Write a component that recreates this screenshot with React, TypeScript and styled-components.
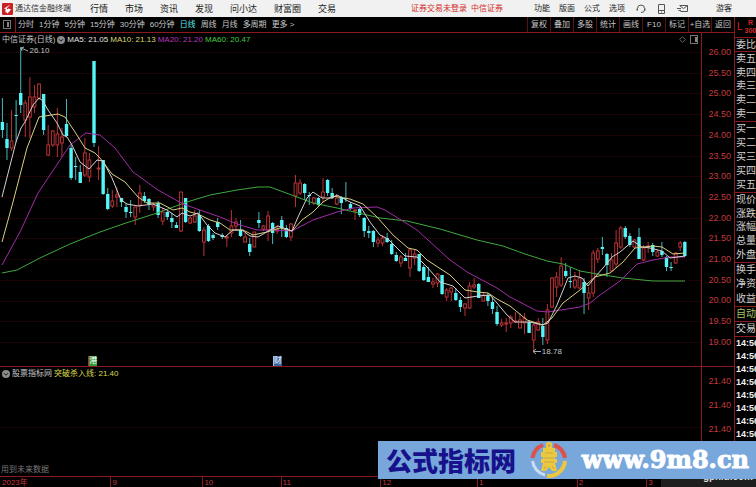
import React from "react";
import styled, { createGlobalStyle } from "styled-components";

const LINE = "#8a1a1e";
const RED = "#c23a3e";
const CYAN = "#54f4f8";

const GlobalStyle = createGlobalStyle`
  * { box-sizing: border-box; }
  body {
    margin: 0;
    background: #000;
    overflow: hidden;
    font-family: "Liberation Sans", "Noto Sans CJK SC", sans-serif;
    font-size: 8px;
    line-height: 12px;
  }
  button {
    margin: 0;
    padding: 0;
    border: 0;
    background: none;
    color: inherit;
    font: inherit;
    white-space: nowrap;
    cursor: pointer;
  }
  svg { display: block; flex: none; }
`;

const Terminal = styled.div`
  position: relative;
  display: flex;
  flex-direction: column;
  min-height: 100vh;
  overflow: hidden;
  color: #c6c6c6;
`;

const TopBar = styled.header`
  display: flex;
  align-items: center;
  height: 17px;
  padding: 0 24px 0 2px;
  background: #f1f1f1;
  color: #222;
  white-space: nowrap;
`;

const Brand = styled.div`
  display: flex;
  align-items: center;
  gap: 2px;
  color: #333;
`;

const Menu = styled.nav`
  display: flex;
  gap: 17px;
  margin-left: 19px;
  font-size: 9px;
`;

const Status = styled.div`
  display: flex;
  gap: 4px;
  margin-left: auto;
  color: #d22a2a;
`;

const Tools = styled.div`
  display: flex;
  align-items: center;
  gap: 9px;
  margin-left: 31px;
`;

const ToolIcons = styled.div`
  display: flex;
  align-items: center;
  gap: 12px;
  margin: 0 28px 0 11px;
`;

const IconButton = styled.button`
  display: flex;
`;

const Body = styled.div`
  display: flex;
  flex: 1;
`;

const Workspace = styled.main`
  display: flex;
  flex: 1;
  flex-direction: column;
  min-width: 0;
`;

const Toolbar = styled.div`
  display: flex;
  height: 16px;
  border-bottom: 1px solid ${LINE};
`;

const PanelToggle = styled.button`
  display: flex;
  align-items: center;
  justify-content: center;
  width: 16px;
  border-right: 1px solid ${LINE};
`;

const Periods = styled.div`
  display: flex;
  align-items: center;
  gap: 5px;
  margin-left: 2px;
`;

const Period = styled.button<{ $active?: boolean }>`
  color: ${(p) => (p.$active ? "#5fe6ea" : "#c6c6c6")};
`;

const Actions = styled.div`
  display: flex;
  margin-left: auto;
`;

const Action = styled.button`
  width: 23px;
  border-left: 1px solid #5c1013;
`;

const Pane = styled.section<{ $grow?: boolean }>`
  display: flex;
  flex: ${(p) => (p.$grow ? "1" : "none")};
  border-bottom: 1px solid ${LINE};
`;

const Plot = styled.div`
  position: relative;
  flex: 1;
  min-width: 0;
`;

const InfoRow = styled.div`
  display: flex;
  align-items: center;
  gap: 2px;
  height: 13px;
  padding: 0 2px;
  white-space: nowrap;
`;

const Legend = styled.span<{ $color: string }>`
  color: ${(p) => p.$color};
`;

const CornerIcons = styled.div`
  display: flex;
  align-items: center;
  gap: 4px;
  margin-left: auto;
`;

const ChartSvg = styled.svg`
  width: 100%;
  height: 320px;
`;

const Callout = styled.span<{ $left: string; $top: string }>`
  position: absolute;
  left: ${(p) => p.$left};
  top: ${(p) => p.$top};
  font-size: 8px;
  line-height: 10px;
  color: #c4c4c4;
`;

const EventTag = styled.span<{ $left: string; $bg: string; $edge: string }>`
  position: absolute;
  left: ${(p) => p.$left};
  bottom: 0;
  width: 9px;
  height: 10px;
  background: ${(p) => p.$bg};
  border-left: 1px solid ${(p) => p.$edge};
  color: #fff;
  line-height: 10px;
`;

const PriceScale = styled.div`
  display: flex;
  flex-direction: column;
  justify-content: space-between;
  width: 33px;
  padding: 13px 3px 18px 0;
  border-left: 1px solid ${LINE};
  color: ${RED};
  font-size: 9px;
  text-align: right;
`;

const SubScale = styled(PriceScale)`
  justify-content: flex-start;
  gap: 12px;
  padding-top: 8px;
`;

const SubPlot = styled(Plot)`
  display: flex;
  flex-direction: column;
`;

const MidLine = styled.div`
  height: 48px;
  border-bottom: 1px dotted #300608;
`;

const FutureNote = styled.div`
  margin-top: auto;
  padding: 0 1px;
  color: #777;
`;

const TimeAxis = styled.div`
  display: flex;
  height: 10px;
  padding-right: 33px;
  color: ${RED};
  line-height: 11px;
`;

const Month = styled.div<{ $span: number }>`
  flex: ${(p) => p.$span} 0 0;
  min-width: 0;
  padding-left: 1px;
  border-left: 1px solid ${LINE};
  white-space: nowrap;

  &:first-child {
    border-left-color: transparent;
  }
`;

const QuotePanel = styled.aside`
  width: 22px;
  height: 470px;
  flex: none;
  overflow: hidden;
  border-left: 1px solid ${LINE};
  color: #d0d0d0;
  font-size: 10px;
  white-space: nowrap;
`;

const QuoteHead = styled.div`
  display: flex;
  align-items: center;
  gap: 2px;
  height: 21px;
  padding-left: 2px;
  border-bottom: 1px solid ${LINE};
  color: #d8262c;
`;

const Market = styled.span`
  display: flex;
  flex-direction: column;
  align-items: center;
  font-size: 7px;
  font-weight: bold;
  line-height: 8px;
`;

const QuoteGroup = styled.ul<{ $height: number; $color?: string }>`
  display: flex;
  flex-direction: column;
  height: ${(p) => p.$height}px;
  margin: 0;
  padding: 0 0 0 1px;
  border-bottom: 1px solid ${LINE};
  color: ${(p) => p.$color || "inherit"};
  list-style: none;
`;

const QuoteRow = styled.li`
  display: flex;
  flex: 1;
  align-items: center;
  min-height: 0;
`;

const Ticks = styled.ul`
  margin: 0;
  padding: 0 0 0 1px;
  color: #f0f0f0;
  font-size: 9px;
  font-weight: bold;
  line-height: 13px;
  list-style: none;
`;

const Banner = styled.a`
  position: absolute;
  right: 0;
  bottom: 8px;
  display: flex;
  align-items: center;
  justify-content: space-between;
  width: 50%;
  height: 38px;
  padding: 0 7px 0 8px;
  background: #78a7db;
  text-decoration: none;
  white-space: nowrap;
`;

const BannerName = styled.strong`
  color: #17128c;
  font: 900 26px/36px "Noto Sans CJK SC", sans-serif;
`;

const BannerUrl = styled.strong`
  color: #fff;
  font: bold 24px/36px "DejaVu Serif", serif;
  -webkit-text-stroke: 1px #fff;
`;

const SourceMark = styled.div`
  position: absolute;
  right: 0;
  bottom: 0;
  width: 95px;
  height: 16px;
  padding-right: 3px;
  background: #1e1e1e;
  color: #ddd;
  font-size: 10px;
  font-weight: bold;
  text-align: right;
`;

type Candle = ["u" | "d", number, number, number, number];

// Direction, then the high, body top, body bottom and low of every session.
const candles: Candle[] = [
  ["d", 98, 122, 130, 138], ["d", 123, 139, 148, 160], ["u", 110, 141, 148, 151], ["d", 100, 115, 116, 142],
  ["d", 47, 93, 105, 113], ["u", 100, 103, 120, 137], ["u", 77, 97, 117, 138], ["u", 85, 97, 107, 113],
  ["u", 84, 84, 98, 100], ["d", 94, 94, 130, 135], ["u", 125, 145, 155, 156], ["u", 130, 131, 145, 147],
  ["u", 108, 134, 145, 157], ["u", 128, 137, 143, 157], ["d", 99, 124, 136, 137], ["d", 145, 148, 178, 180],
  ["d", 157, 166, 167, 180], ["d", 165, 172, 183, 183], ["u", 138, 153, 175, 177], ["u", 153, 160, 177, 182],
  ["d", 61, 61, 143, 147], ["u", 146, 168, 169, 180], ["d", 160, 160, 194, 195], ["d", 188, 194, 209, 210],
  ["u", 190, 201, 206, 208], ["u", 187, 195, 197, 207], ["d", 198, 198, 202, 207], ["d", 203, 207, 212, 218],
  ["d", 200, 212, 213, 217], ["u", 207, 207, 217, 225], ["u", 185, 193, 205, 213], ["d", 192, 196, 201, 203],
  ["d", 198, 199, 204, 210], ["u", 203, 205, 207, 211], ["d", 201, 203, 215, 218], ["u", 208, 212, 221, 225],
  ["d", 211, 212, 217, 220], ["d", 213, 218, 222, 228], ["d", 222, 225, 228, 228], ["u", 192, 192, 231, 232],
  ["d", 198, 198, 222, 223], ["u", 217, 218, 223, 224], ["u", 210, 216, 222, 223], ["d", 210, 215, 231, 232],
  ["u", 227, 230, 242, 256], ["d", 224, 226, 241, 242], ["d", 233, 235, 238, 240], ["d", 218, 222, 227, 230],
  ["d", 233, 235, 237, 239], ["u", 235, 237, 238, 247], ["u", 210, 226, 233, 237], ["u", 218, 222, 226, 230],
  ["d", 220, 230, 236, 237], ["u", 233, 237, 242, 242], ["d", 238, 244, 252, 256], ["u", 232, 232, 247, 247],
  ["d", 212, 220, 223, 228], ["u", 225, 226, 229, 231], ["u", 211, 216, 230, 241], ["d", 222, 223, 233, 244],
  ["u", 225, 229, 231, 234], ["d", 216, 220, 228, 237], ["d", 225, 228, 237, 238], ["u", 223, 224, 237, 241],
  ["u", 175, 183, 196, 207], ["u", 179, 183, 193, 195], ["d", 183, 184, 193, 200], ["d", 192, 195, 196, 205],
  ["u", 197, 198, 203, 205], ["d", 197, 198, 205, 207], ["u", 178, 192, 197, 202], ["d", 179, 180, 193, 196],
  ["d", 188, 193, 198, 199], ["u", 194, 198, 204, 205], ["d", 196, 197, 203, 214], ["d", 182, 198, 199, 202],
  ["d", 202, 204, 209, 210], ["u", 209, 210, 211, 220], ["d", 208, 209, 215, 217], ["d", 217, 218, 231, 237],
  ["d", 226, 231, 233, 238], ["d", 230, 231, 242, 247], ["u", 237, 240, 243, 247], ["u", 235, 238, 243, 246],
  ["d", 233, 238, 242, 243], ["d", 240, 244, 254, 255], ["d", 252, 255, 261, 262], ["u", 255, 257, 263, 267],
  ["d", 253, 258, 261, 261], ["u", 248, 250, 268, 277], ["u", 250, 254, 258, 265], ["d", 254, 254, 271, 272],
  ["d", 265, 267, 280, 281], ["d", 267, 277, 282, 282], ["u", 278, 282, 284, 288], ["u", 273, 274, 283, 287],
  ["d", 275, 275, 294, 295], ["u", 288, 290, 297, 301], ["u", 287, 288, 292, 301], ["d", 288, 293, 300, 301],
  ["d", 297, 300, 307, 312], ["u", 303, 304, 308, 316], ["u", 282, 286, 308, 309], ["u", 278, 285, 287, 289],
  ["d", 283, 284, 298, 298], ["u", 292, 295, 301, 301], ["d", 293, 295, 301, 306], ["d", 297, 302, 309, 314],
  ["d", 306, 312, 324, 326], ["u", 319, 323, 325, 327], ["u", 318, 323, 323, 332], ["u", 315, 317, 323, 328],
  ["u", 312, 321, 322, 323], ["u", 313, 320, 328, 328], ["u", 313, 318, 323, 334], ["d", 320, 322, 333, 333],
  ["u", 322, 325, 340, 352], ["u", 318, 322, 330, 331], ["d", 318, 326, 337, 345], ["u", 304, 310, 340, 344],
  ["u", 277, 278, 307, 308], ["u", 272, 277, 287, 297], ["u", 257, 266, 285, 287], ["d", 263, 271, 276, 278],
  ["d", 267, 281, 282, 288], ["u", 272, 280, 287, 289], ["u", 270, 278, 288, 289], ["d", 278, 282, 293, 314],
  ["u", 287, 293, 298, 310], ["u", 250, 253, 293, 297], ["u", 248, 251, 259, 263], ["d", 237, 247, 249, 255],
  ["d", 253, 254, 265, 277], ["u", 253, 260, 271, 272], ["u", 230, 243, 264, 268], ["u", 226, 228, 247, 249],
  ["d", 226, 228, 237, 239], ["d", 233, 236, 245, 247], ["u", 239, 240, 247, 248], ["d", 228, 237, 259, 259],
  ["u", 245, 248, 260, 261], ["u", 242, 246, 247, 253], ["d", 243, 245, 252, 256], ["u", 250, 252, 256, 257],
  ["d", 242, 251, 255, 257], ["d", 256, 257, 267, 271], ["d", 262, 267, 268, 271], ["u", 252, 253, 263, 264],
  ["u", 241, 243, 247, 251], ["d", 241, 242, 256, 257],
];

const averages = [
  {
    color: "#3fa83f",
    points:
      "2,273 17,270 40,258 70,244 100,232 123,224 157,213 187,202 210,195 237,190 258,187 270,187 297,197 313,203 337,208 350,211 380,218 407,221 440,229 477,240 503,246 525,254 547,261 563,264 580,271 597,274 623,278 653,281 685,281",
  },
  {
    color: "#a02ca6",
    points:
      "2,265 20,232 38,193 70,145 86,133 100,135 115,148 133,172 158,190 183,204 200,210 220,217 237,224 257,230 273,230 292,231 313,220 337,212 353,208 377,207 385,210 417,230 450,260 467,272 497,288 510,297 537,311 548,312 580,307 590,303 600,295 620,281 637,264 653,260 670,257 685,257",
  },
  {
    color: "#d8d080",
    points:
      "2,242 13,202 27,148 39,117 45,116 58,114 65,117 75,132 85,148 95,153 100,158 112,174 125,182 138,197 147,203 160,203 173,210 182,208 190,212 198,214 210,220 220,223 230,230 243,230 253,235 267,232 280,228 292,231 302,220 313,212 323,202 333,196 350,199 363,204 377,217 393,235 408,248 417,250 427,260 450,275 465,290 478,292 488,293 497,299 510,306 527,320 543,325 552,318 563,303 580,290 595,277 610,273 623,262 635,248 653,246 662,247 673,254 685,253",
  },
  {
    color: "#d6d0d0",
    points:
      "2,197 16,142 21,128 25,122 33,105 39,98 43,101 48,110 57,123 63,135 67,137 72,145 80,162 89,169 97,160 103,161 112,178 121,200 127,204 138,206 153,204 167,210 177,217 182,213 190,216 198,213 207,225 215,233 225,237 233,230 242,230 250,236 258,237 270,230 278,226 292,231 298,217 307,198 313,192 322,198 332,198 337,195 350,202 360,206 370,222 380,235 388,239 397,248 405,256 417,257 428,268 440,282 453,286 465,298 478,296 490,295 497,303 507,315 515,322 530,322 542,325 548,323 557,305 568,278 575,276 582,278 588,286 595,277 603,268 612,257 620,252 633,241 642,247 650,248 662,251 670,258 685,256",
  },
];

const prices = Array.from({ length: 15 }, (_, i) => (26 - i * 0.5).toFixed(2));

const CandleChart = () => (
  <ChartSvg viewBox="0 46 701 320" preserveAspectRatio="none" aria-label="中信证券 日线">
    {prices.map((price, i) => (
      <path
        key={price}
        d={`M0 ${Math.round(52 + i * 20.71) + 0.5}H701`}
        stroke="#380608"
        strokeDasharray="1 1"
      />
    ))}
    {candles.map(([dir, high, top, bottom, low], i) => {
      const x = 2.4 + i * 4.58;
      const height = Math.max(bottom - top, 1);
      return dir === "d" ? (
        <g key={i}>
          <path d={`M${x} ${high}V${low}`} stroke="#48b8bc" />
          <rect x={x - 1.7} y={top} width="3.4" height={height} fill={CYAN} />
        </g>
      ) : (
        <g key={i} stroke="#b83236" fill="none">
          <path d={`M${x} ${high}V${top}M${x} ${bottom}V${low}`} />
          <rect x={x - 1.4} y={top} width="2.8" height={height} />
        </g>
      );
    })}
    {averages.map((line) => (
      <polyline key={line.color} points={line.points} fill="none" stroke={line.color} strokeLinejoin="round" />
    ))}
    <path d="M28 51L21 48M24 47L21 48L22 51" stroke="#aaa" fill="none" />
    <path d="M541 351.500H533M536 349L533 351.500L536 354" stroke="#aaa" fill="none" />
  </ChartSvg>
);

const BrandMark = () => (
  <svg width="11" height="12" viewBox="0 0 11 12">
    <rect width="11" height="12" rx="1" fill="#cc2024" />
    <path d="M8.500 1.500L2 5.500L4 6.500L3 8L5.500 10.500L9 6.500L6.500 5.500L5 6.500L5 5Z" fill="#fff" />
  </svg>
);

const PanelIcon = ({ side }: { side: "left" | "right" }) => (
  <svg width="9" height="9" viewBox="0 0 9 9">
    <rect x=".5" y=".5" width="7" height="8" fill="none" stroke="#777" />
    <rect x={side === "left" ? 4 : 5} y="2" width="2" height="5" fill="#888" />
  </svg>
);

const DropIcon = () => (
  <svg width="8" height="8" viewBox="0 0 8 8">
    <circle cx="4" cy="4" r="4" fill="#8c8c8c" />
    <path d="M2 3.200L4 5.200L6 3.200" stroke="#111" fill="none" />
  </svg>
);

const Emblem = () => (
  <svg width="38" height="38" viewBox="0 0 38 38" fill="none">
    <path d="M2.500 17A16.500 16.500 0 0 1 13 4" stroke="#dc5148" strokeWidth="4" />
    <path d="M24 4A16.500 16.500 0 0 1 35 17" stroke="#dc5148" strokeWidth="4" />
    <path d="M2.500 20A16.500 16.500 0 0 0 15 34" stroke="#c9def5" strokeWidth="3" />
    <path d="M35 20A16.500 16.500 0 0 1 17 35" stroke="#ecc83e" strokeWidth="4" />
    <path
      d="M16 2Q19 0 22 2V7H25V11H27V16H25V18H27V22H25L27 30H22L19 26L16 30H11L13 22H11V18H13V16H11V11H13V7H16Z"
      fill="#ecc83e"
    />
    <path d="M15 12H23M14 17H24M14 21H24M16 25L14 28M22 25L24 28" stroke="#c2a64c" />
    <circle cx="19" cy="4.500" r="1" fill="#a9925a" />
  </svg>
);

const menus = ["行情", "市场", "资讯", "发现", "问小达", "财富圈", "交易"];
const tools = ["功能", "版面", "公式", "选项"];
const periods = ["分时", "1分钟", "5分钟", "15分钟", "30分钟", "60分钟", "日线", "周线", "月线", "多周期", "更多 >"];
const actions = ["复权", "叠加", "多股", "统计", "画线", "F10", "标记", "+自选", "返回"];
const months: [string, number][] = [
  ["2023年", 111], ["9", 92], ["10", 78], ["11", 100], ["12", 97], ["1", 100], ["2", 69], ["3", 54],
];
const quoteGroups: { rows: string[]; height: number; color?: string }[] = [
  { rows: ["委比"], height: 14 },
  { rows: ["卖五", "卖四", "卖三", "卖二", "卖一"], height: 70 },
  { rows: ["买一", "买二", "买三", "买四", "买五"], height: 71 },
  { rows: ["现价", "涨跌", "涨幅", "总量", "外盘"], height: 70 },
  { rows: ["换手", "净资", "收益"], height: 44 },
  { rows: ["自动"], height: 15, color: "#a6c46a" },
  { rows: ["交易"], height: 15 },
];

export default function App() {
  return (
    <Terminal>
      <GlobalStyle />
      <TopBar>
        <Brand>
          <BrandMark />
          通达信金融终端
        </Brand>
        <Menu>
          {menus.map((name) => (
            <button key={name}>{name}</button>
          ))}
        </Menu>
        <Status>
          <span>证券交易未登录</span>
          <span>中信证券</span>
        </Status>
        <Tools>
          {tools.map((name) => (
            <button key={name}>{name}</button>
          ))}
        </Tools>
        <ToolIcons>
          <IconButton aria-label="客服">
            <svg width="10" height="10" viewBox="0 0 10 10" fill="none" stroke="#555">
              <path d="M1.500 6.500V4.500A3.500 3.500 0 0 1 8.500 4.500V6Q8.500 8.500 5 8.500M1 4.500V6.500M9 4.500V6.500" />
            </svg>
          </IconButton>
          <IconButton aria-label="手机">
            <svg width="7" height="10" viewBox="0 0 7 10" fill="none" stroke="#555">
              <path d="M.5 .5H6.500V9.500H.5ZM.5 6.500H6.500M3 8H4" />
            </svg>
          </IconButton>
          <IconButton aria-label="邮件">
            <svg width="11" height="9" viewBox="0 0 11 9" fill="none" stroke="#555">
              <path d="M3 1.500H10.500V7.500H3.500M2.500 1.500L6.500 4.500L10.500 1.500M0 4.500H4M1.500 6.500H4" />
            </svg>
          </IconButton>
        </ToolIcons>
        <button>游客</button>
      </TopBar>

      <Body>
        <Workspace>
          <Toolbar>
            <PanelToggle aria-label="侧栏">
              <PanelIcon side="left" />
            </PanelToggle>
            <Periods>
              {periods.map((name) => (
                <Period key={name} $active={name === "日线"}>
                  {name}
                </Period>
              ))}
            </Periods>
            <Actions>
              {actions.map((name) => (
                <Action key={name}>{name}</Action>
              ))}
            </Actions>
          </Toolbar>

          <Pane>
            <Plot>
              <InfoRow>
                <span>中信证券(日线)</span>
                <DropIcon />
                <Legend $color="#e0e0e0">MA5: 21.05</Legend>
                <Legend $color="#d8d870">MA10: 21.13</Legend>
                <Legend $color="#b836be">MA20: 21.20</Legend>
                <Legend $color="#44cc44">MA60: 20.47</Legend>
                <CornerIcons>
                  <svg width="7" height="7" viewBox="0 0 7 7">
                    <path d="M3.500 .7L6.300 3.500L3.500 6.300L.7 3.500Z" fill="none" stroke="#666" />
                  </svg>
                  <PanelIcon side="right" />
                </CornerIcons>
              </InfoRow>
              <CandleChart />
              <Callout $left="4.2%" $top="13px">26.10</Callout>
              <Callout $left="77.3%" $top="314px">18.78</Callout>
              <EventTag $left="12.6%" $bg="#2c9c3c" $edge="#d02020">港</EventTag>
              <EventTag $left="38.9%" $bg="#3a64a0" $edge="#9cc4f0">财</EventTag>
            </Plot>
            <PriceScale>
              {prices.map((price) => (
                <span key={price}>{price}</span>
              ))}
            </PriceScale>
          </Pane>

          <Pane $grow>
            <SubPlot>
              <InfoRow>
                <DropIcon />
                <span>股票指标网</span>
                <Legend $color="#d8d84c">突破杀入线: 21.40</Legend>
              </InfoRow>
              <MidLine />
              <FutureNote>用到未来数据</FutureNote>
            </SubPlot>
            <SubScale>
              <span>21.40</span>
              <span>21.40</span>
              <span>21.40</span>
            </SubScale>
          </Pane>

          <TimeAxis>
            {months.map(([name, span]) => (
              <Month key={name} $span={span}>
                {name}
              </Month>
            ))}
          </TimeAxis>
        </Workspace>

        <QuotePanel>
          <QuoteHead>
            <span>L</span>
            <Market>
              <span>R</span>
              <span>300</span>
            </Market>
          </QuoteHead>
          {quoteGroups.map((group) => (
            <QuoteGroup key={group.rows[0]} $height={group.height} $color={group.color}>
              {group.rows.map((row) => (
                <QuoteRow key={row}>{row}</QuoteRow>
              ))}
            </QuoteGroup>
          ))}
          <Ticks>
            {Array.from({ length: 8 }, (_, i) => (
              <li key={i}>14:56</li>
            ))}
          </Ticks>
        </QuotePanel>
      </Body>

      <SourceMark>gpxiu.com</SourceMark>
      <Banner href="#">
        <BannerName>公式指标网</BannerName>
        <Emblem />
        <BannerUrl>www.9m8.cn</BannerUrl>
      </Banner>
    </Terminal>
  );
}
